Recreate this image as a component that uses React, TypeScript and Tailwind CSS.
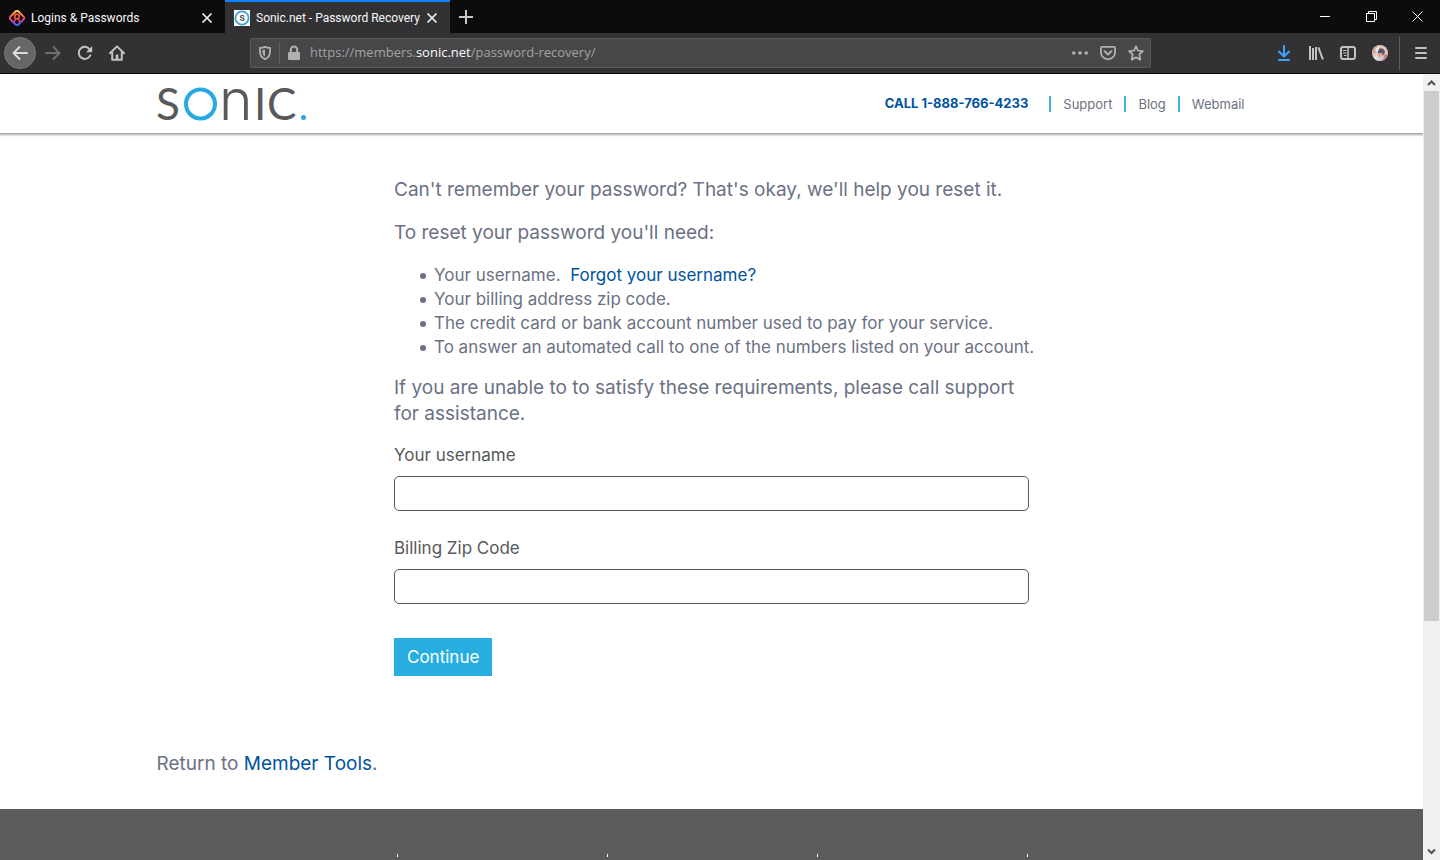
import type { ReactNode } from "react";

const REQUIREMENTS = [
  "Your billing address zip code.",
  "The credit card or bank account number used to pay for your service.",
  "To answer an automated call to one of the numbers listed on your account.",
];

const NAV_LINKS = ["Support", "Blog", "Webmail"];

const BULLET =
  "before:mr-2 before:inline-block before:size-[6px] before:rounded-full before:bg-current before:align-middle before:content-['']";

function LockwiseIcon() {
  return (
    <svg className="shrink-0" width="16" height="16" viewBox="0 0 16 16" fill="none" aria-hidden="true">
      <defs>
        <linearGradient id="lockwise" x1="0" y1="0" x2="0" y2="1">
          <stop offset="0" stopColor="#ffc43d" />
          <stop offset="0.45" stopColor="#ff4f5e" />
          <stop offset="0.7" stopColor="#c13fd0" />
          <stop offset="1" stopColor="#2f6bff" />
        </linearGradient>
      </defs>
      <path
        d="M6.6 1.5 1.5 6.6a2 2 0 0 0 0 2.8l5.1 5.1a2 2 0 0 0 2.8 0l5.1-5.1a2 2 0 0 0 0-2.8L9.4 1.5a2 2 0 0 0-2.8 0Z"
        stroke="url(#lockwise)"
        strokeWidth="2"
      />
      <circle cx="8" cy="6.6" r="2.3" stroke="#ff5a4a" strokeWidth="1.6" />
      <path d="M6.6 8.6 5.2 12M9.4 8.6l1.4 3.4" stroke="#f0406a" strokeWidth="1.5" />
    </svg>
  );
}

function SonicFavicon() {
  return (
    <svg className="shrink-0" width="16" height="16" viewBox="0 0 16 16" aria-hidden="true">
      <rect width="16" height="16" fill="#fff" />
      <circle cx="8" cy="8" r="6.6" fill="none" stroke="#38a5d2" strokeWidth="1.8" />
      <text x="8" y="11" textAnchor="middle" fontSize="8" fontWeight="700" fontFamily="Inter, sans-serif" fill="#4a4a4a">
        S
      </text>
    </svg>
  );
}

function CloseTabIcon() {
  return (
    <svg width="12" height="12" viewBox="0 0 12 12" fill="none" stroke="#f2f2f4" strokeWidth="1.7" aria-hidden="true">
      <path d="m1.5 1.5 9 9M10.5 1.5l-9 9" />
    </svg>
  );
}

function Tab({ title, icon, active }: { title: string; icon: ReactNode; active?: boolean }) {
  return (
    <div
      className={`flex h-full w-[225px] items-center gap-[6px] border-t-2 pl-[9px] pr-3 ${
        active ? "border-[#0a84ff] bg-[#323234]" : "border-[#0c0c0d]"
      }`}
    >
      {icon}
      <span className="flex-1 whitespace-nowrap font-['Roboto',sans-serif] text-[12px] text-[#f9f9fa]">{title}</span>
      <button type="button" aria-label={`Close ${title}`}>
        <CloseTabIcon />
      </button>
    </div>
  );
}

function ToolButton({ label, children }: { label: string; children: ReactNode }) {
  return (
    <button type="button" aria-label={label} className="flex h-8 w-8 shrink-0 items-center justify-center">
      {children}
    </button>
  );
}

function WindowButton({ label, children }: { label: string; children: ReactNode }) {
  return (
    <button type="button" aria-label={label} className="flex h-full w-[46px] items-center justify-center">
      <svg width="11" height="11" viewBox="0 0 11 11" fill="none" stroke="#fff" aria-hidden="true">
        {children}
      </svg>
    </button>
  );
}

function TitleBar() {
  return (
    <div className="flex h-[33px] bg-[#0c0c0d]">
      <Tab title="Logins & Passwords" icon={<LockwiseIcon />} />
      <Tab title="Sonic.net - Password Recovery" icon={<SonicFavicon />} active />
      <button type="button" aria-label="New tab" className="flex w-8 items-center justify-center">
        <svg width="16" height="16" viewBox="0 0 16 16" stroke="#c8c8ca" strokeWidth="2" aria-hidden="true">
          <path d="M8 1v14M1 8h14" />
        </svg>
      </button>
      <div className="ml-auto flex">
        <WindowButton label="Minimize">
          <path d="M0 5.5h10" />
        </WindowButton>
        <WindowButton label="Restore">
          <path d="M.5 2.5h8v8h-8zM2.5 2.5v-2h8v8h-2" />
        </WindowButton>
        <WindowButton label="Close window">
          <path d="m.5.5 10 10M10.5.5l-10 10" />
        </WindowButton>
      </div>
    </div>
  );
}

function AddressBar() {
  return (
    <div className="mx-[117px] flex h-[30px] min-w-0 flex-1 items-center rounded-[2px] border border-[#5a5a5c] bg-[#474749] text-[#b1b1b3]">
      <button type="button" aria-label="Tracking protection" className="flex w-[28px] justify-center">
        <svg width="14" height="16" viewBox="0 0 14 16" fill="none" aria-hidden="true">
          <path
            d="M7 1.9c1.6.7 3.2 1 5 1.1v3.8c0 3.5-1.7 6-5 7.3-3.3-1.3-5-3.8-5-7.3V3c1.8-.1 3.4-.4 5-1.1Z"
            stroke="currentColor"
            strokeWidth="1.8"
            strokeLinejoin="round"
          />
          <path d="M7 4.5v7c-1.7-1-2.5-2.5-2.5-4.6V5c.9-.1 1.7-.2 2.5-.5Z" fill="currentColor" />
        </svg>
      </button>
      <span className="h-[22px] w-px bg-[#626265]" />
      <button type="button" aria-label="Site information" className="flex w-[28px] justify-center">
        <svg width="14" height="16" viewBox="0 0 14 16" fill="none" aria-hidden="true">
          <rect x="1" y="7" width="12" height="8" rx="1.2" fill="currentColor" />
          <path d="M3.8 8V4.8a3.2 3.2 0 0 1 6.4 0V8" stroke="currentColor" strokeWidth="2" />
        </svg>
      </button>
      <div role="textbox" aria-label="Address" className="min-w-0 flex-1 truncate pl-[2px] text-[13px] text-[#a2a2a4]">
        https://members.<span className="text-[#f9f9fa]">sonic.net</span>/password-recovery/
      </div>
      <div className="flex gap-3 pr-[6px]">
        <button type="button" aria-label="Page actions">
          <svg width="16" height="16" viewBox="0 0 16 16" fill="currentColor" aria-hidden="true">
            <circle cx="1.8" cy="8" r="1.8" />
            <circle cx="8" cy="8" r="1.8" />
            <circle cx="14.2" cy="8" r="1.8" />
          </svg>
        </button>
        <button type="button" aria-label="Save to Pocket">
          <svg width="16" height="16" viewBox="0 0 16 16" fill="none" stroke="currentColor" strokeWidth="1.8" aria-hidden="true">
            <path d="M2 1.9h12a1.1 1.1 0 0 1 1.1 1.1v4.2a7.1 7.1 0 0 1-14.2 0V3A1.1 1.1 0 0 1 2 1.9Z" />
            <path d="m4.6 6.2 3.4 3.2 3.4-3.2" strokeLinecap="round" strokeLinejoin="round" strokeWidth="2" />
          </svg>
        </button>
        <button type="button" aria-label="Bookmark this page">
          <svg width="16" height="16" viewBox="0 0 16 16" fill="none" stroke="currentColor" strokeWidth="1.8" strokeLinejoin="round" aria-hidden="true">
            <path d="m8 1.3 2 4.4 4.9.5-3.6 3.3 1 5.1L8 12.2l-4.3 2.4 1-5.1L1.1 6.2 6 5.7Z" />
          </svg>
        </button>
      </div>
    </div>
  );
}

function Toolbar() {
  return (
    <div className="flex h-[41px] items-center border-b border-[#0c0c0d] bg-[#323234] pl-1 pr-[3px] text-[#c3c3c5]">
      <button
        type="button"
        aria-label="Back"
        className="mr-px flex h-8 w-8 shrink-0 items-center justify-center rounded-full border border-[#777779] bg-[#666668] text-[#dcdcde]"
      >
        <svg width="16" height="16" viewBox="0 0 16 16" fill="none" stroke="currentColor" strokeWidth="2" strokeLinecap="round" strokeLinejoin="round" aria-hidden="true">
          <path d="M15 8H1.5M7.5 2l-6 6 6 6" />
        </svg>
      </button>
      <ToolButton label="Forward">
        <svg width="16" height="16" viewBox="0 0 16 16" fill="none" stroke="#707072" strokeWidth="2" strokeLinecap="round" strokeLinejoin="round" aria-hidden="true">
          <path d="M1 8h13.5M8.5 2l6 6-6 6" />
        </svg>
      </ToolButton>
      <ToolButton label="Reload">
        <svg width="16" height="16" viewBox="0 0 16 16" fill="none" aria-hidden="true">
          <path d="M13.3 10.3A6 6 0 1 1 12.4 4" stroke="currentColor" strokeWidth="2" strokeLinecap="round" />
          <path d="M15.2 1v6.2H9Z" fill="currentColor" />
        </svg>
      </ToolButton>
      <ToolButton label="Home">
        <svg width="16" height="16" viewBox="0 0 16 16" fill="none" stroke="currentColor" strokeWidth="2" aria-hidden="true">
          <path d="M1 8.2 8 1.4l7 6.8" strokeLinecap="round" strokeLinejoin="round" />
          <path d="M3.2 7v7.8h9.6V7" strokeLinejoin="round" />
          <path d="M8 15V9.5" strokeWidth="2.6" />
        </svg>
      </ToolButton>
      <AddressBar />
      <ToolButton label="Downloads">
        <svg width="16" height="16" viewBox="0 0 16 16" fill="none" stroke="#45a1ff" strokeWidth="2" strokeLinecap="round" strokeLinejoin="round" aria-hidden="true">
          <path d="M8 1v10M3 6.5l5 5 5-5M3 15h10" />
        </svg>
      </ToolButton>
      <ToolButton label="Library">
        <svg width="16" height="16" viewBox="0 0 16 16" fill="none" stroke="currentColor" strokeWidth="2" aria-hidden="true">
          <path d="M2 1v14M5 3v12M8 2v13M10.4 2.3l4.5 12.2" />
        </svg>
      </ToolButton>
      <ToolButton label="Sidebars">
        <svg width="16" height="16" viewBox="0 0 16 16" fill="none" stroke="currentColor" aria-hidden="true">
          <rect x="1" y="2" width="14" height="12" rx="2.2" strokeWidth="2" />
          <path d="M8 2.5v11" strokeWidth="1.5" />
          <path d="M3 5.5h3.500M3 8h3.500M4 10.5h2.500" />
        </svg>
      </ToolButton>
      <ToolButton label="Account">
        <svg width="16" height="16" viewBox="0 0 16 16" aria-hidden="true">
          <defs>
            <clipPath id="avatar">
              <circle cx="8" cy="8" r="8" />
            </clipPath>
          </defs>
          <g clipPath="url(#avatar)">
            <rect width="16" height="16" fill="#e0c8c2" />
            <path d="M0 0h7L4 7 0 9Z" fill="#d3a39d" />
            <path d="M6 4c3-2 7 0 7 3l-1 3-4 1-2-3Z" fill="#7d5560" />
            <circle cx="9" cy="6.5" r="2.2" fill="#3d5a7a" />
            <path d="M7 8h3l1 2-3 2-2-1Z" fill="#e8a08c" />
            <path d="M1 11l4-1 3 6H3Z" fill="#d4dfdf" />
            <path d="M12 10l4-1v5l-5 2Z" fill="#b3868a" />
            <path d="M3 4l4-3v4L4 7Z" fill="#f3e3df" />
          </g>
        </svg>
      </ToolButton>
      <span className="ml-[3px] mr-[5px] h-[34px] w-px shrink-0 bg-[#5c5c5e]" />
      <ToolButton label="Menu">
        <svg width="14" height="14" viewBox="0 0 14 14" stroke="currentColor" strokeWidth="2" strokeLinecap="round" aria-hidden="true">
          <path d="M2 2h10M2 7h10M2 12h10" />
        </svg>
      </ToolButton>
    </div>
  );
}

function SonicLogo() {
  return (
    <svg className="overflow-visible" width="152" height="36" viewBox="0 0 152 36" fill="#58595b" role="img" aria-label="Sonic">
      <g fontFamily="Lato, sans-serif" fontSize="44" fontWeight="400">
        <text x="-1" y="34">S</text>
        <text x="97" y="34">I</text>
        <text x="110" y="34">C</text>
      </g>
      <text x="62" y="34" fontFamily="Inter, sans-serif" fontSize="57" fontWeight="300">n</text>
      <circle cx="43.5" cy="18" r="14.5" fill="none" stroke="#27a9e1" strokeWidth="4" />
      <circle cx="146.5" cy="31.5" r="2.5" fill="#27a9e1" />
    </svg>
  );
}

function SiteHeader() {
  return (
    <header className="bg-white shadow-[0_1px_2px_1px_rgba(0,0,0,0.35)]">
      <div className="mx-auto flex h-[59px] max-w-[1110px] items-center justify-between">
        <a href="#home">
          <SonicLogo />
        </a>
        <nav className="mr-[22px] flex items-center text-[13px] text-[#6b7280]">
          <a href="tel:18887664233" className="mr-[21px] font-bold text-[#00539f]">
            CALL 1-888-766-4233
          </a>
          {NAV_LINKS.map((link) => (
            <a key={link} href={`#${link}`} className="border-l-2 border-[#3fb1de] px-3 leading-4 last:pr-0">
              {link}
            </a>
          ))}
        </nav>
      </div>
    </header>
  );
}

function Field({ id, label }: { id: string; label: string }) {
  return (
    <div>
      <label htmlFor={id} className="mb-[9px] block text-[17px] leading-6 text-[#58595b]">
        {label}
      </label>
      <input id={id} type="text" className="block h-[35px] w-full rounded-[5px] border border-[#58595b] bg-white px-3" />
    </div>
  );
}

function RecoveryForm() {
  return (
    <main className="mx-auto w-full max-w-[1110px] pt-[44px] pb-8 text-[19px] leading-[26px] text-[#6b7184]">
      <form className="mx-auto max-w-[635px]" onSubmit={(e) => e.preventDefault()}>
        <p className="mb-[17px]">Can't remember your password? That's okay, we'll help you reset it.</p>
        <p className="mb-[17px]">To reset your password you'll need:</p>
        <ul className="-mr-4 mb-4 pl-[26px] text-[17px] leading-6">
          <li className={BULLET}>
            Your username.&nbsp;{" "}
            <a href="#username" className="text-[#00539f]">
              Forgot your username?
            </a>
          </li>
          {REQUIREMENTS.map((item) => (
            <li key={item} className={BULLET}>
              {item}
            </li>
          ))}
        </ul>
        <p className="mb-4">
          If you are unable to to satisfy these requirements, please call support for assistance.
        </p>
        <div className="space-y-[25px]">
          <Field id="username" label="Your username" />
          <Field id="zip" label="Billing Zip Code" />
        </div>
        <button type="submit" className="mt-[34px] block h-[38px] bg-[#27aee1] px-[13px] text-[17px] leading-6 text-white">
          Continue
        </button>
      </form>
      <p className="mt-[75px]">
        Return to{" "}
        <a href="#tools" className="text-[#00539f]">
          Member Tools
        </a>
        .
      </p>
    </main>
  );
}

function Scrollbar() {
  return (
    <div className="flex w-[17px] shrink-0 flex-col items-center bg-[#f0f0f0] px-px" aria-hidden="true">
      <svg width="15" height="17" viewBox="0 0 15 17" fill="none" stroke="#505050" strokeWidth="2">
        <path d="M4 11l3.5-3.5L11 11" />
      </svg>
      <div className="h-[530px] w-full bg-[#cdcdcd]" />
      <svg className="mt-auto" width="15" height="17" viewBox="0 0 15 17" fill="none" stroke="#505050" strokeWidth="2">
        <path d="M4 6.5 7.5 10 11 6.5" />
      </svg>
    </div>
  );
}

export default function App() {
  return (
    <div className="flex min-h-screen flex-col bg-white font-['Open_Sans',sans-serif]">
      <TitleBar />
      <Toolbar />
      <div className="flex flex-1">
        <div className="flex min-w-0 flex-1 flex-col font-['Inter',sans-serif]">
          <SiteHeader />
          <RecoveryForm />
          <footer className="flex-1 bg-[#5b5b5b] pt-[45px]">
            {/* column dividers */}
            <div className="mx-auto grid max-w-[1050px] grid-cols-5">
              {[1, 2, 3, 4, 5].map((col) => (
                <span key={col} className="h-[3px] border-l border-white first:border-l-0" />
              ))}
            </div>
          </footer>
        </div>
        <Scrollbar />
      </div>
    </div>
  );
}
